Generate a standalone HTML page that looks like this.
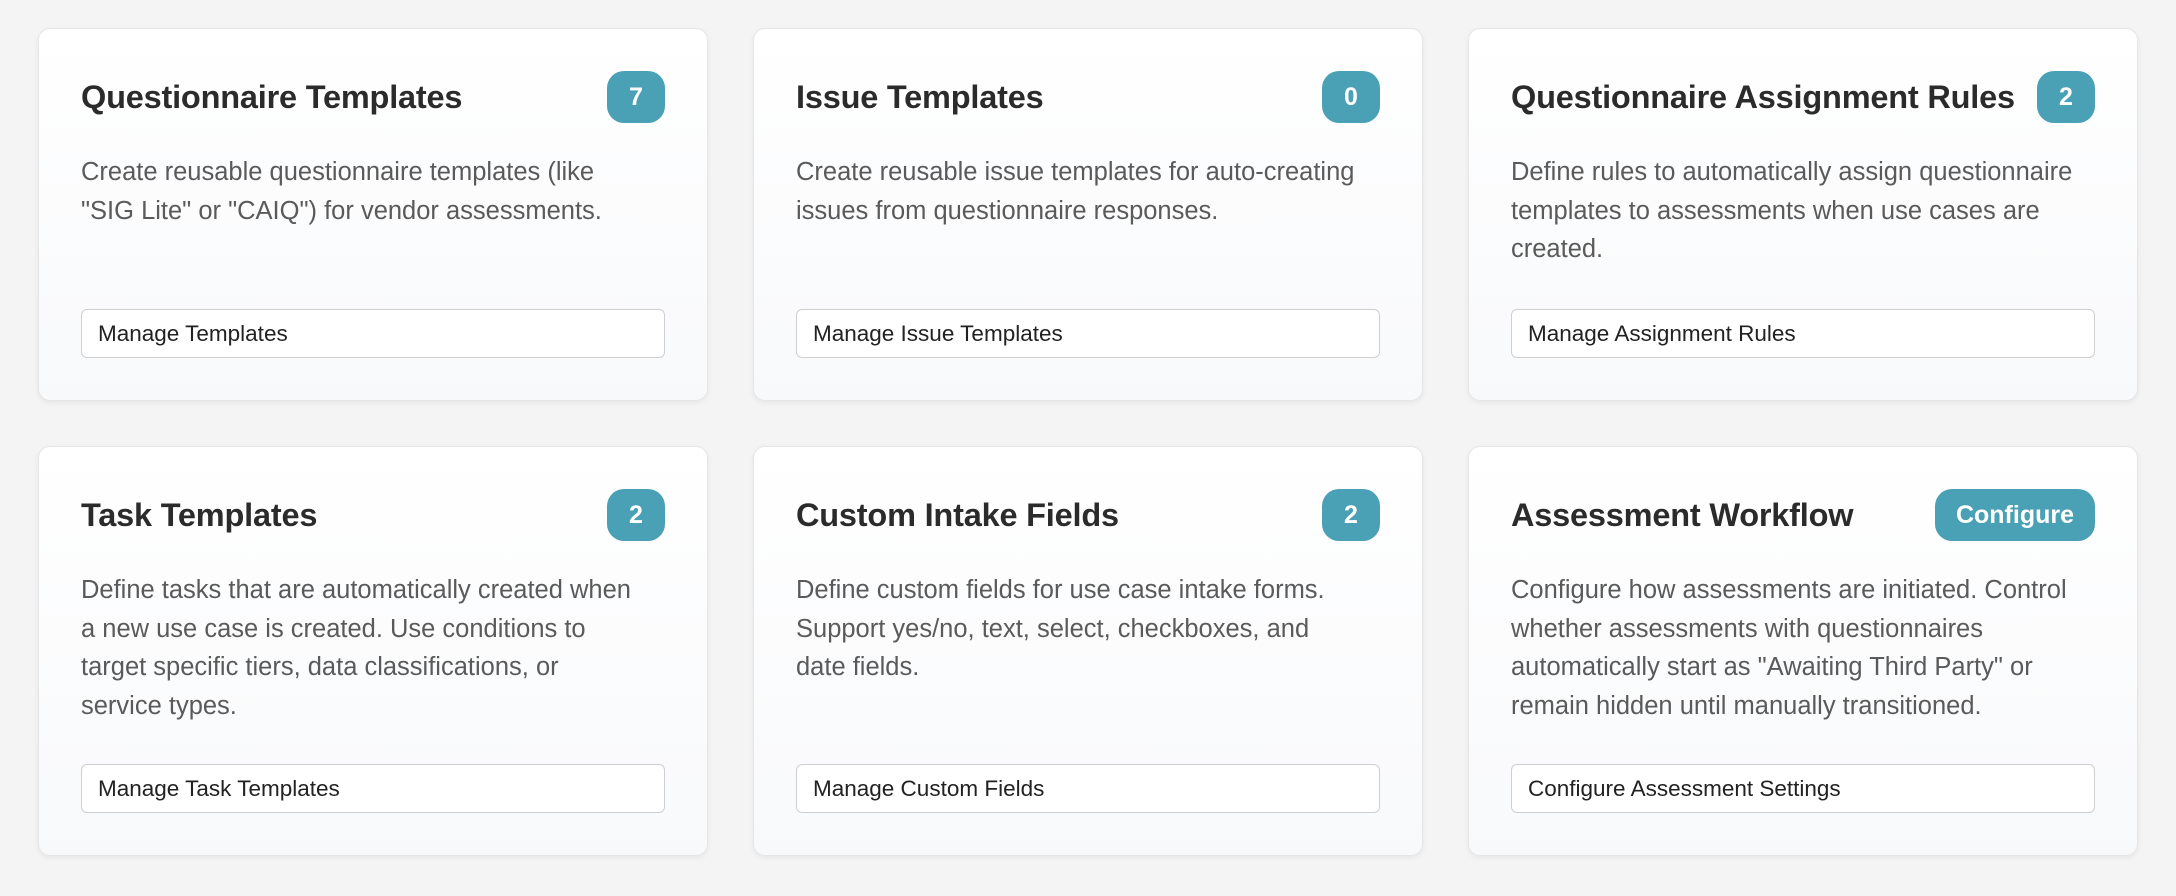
<!DOCTYPE html>
<html><head><meta charset="utf-8"><style>
*{box-sizing:border-box;margin:0;padding:0}
body{width:2176px;height:896px;background:#f4f4f4;font-family:"Liberation Sans",Arial,sans-serif;overflow:hidden}
.grid{position:absolute;left:38px;top:28px;display:grid;grid-template-columns:670px 670px 670px;grid-template-rows:373px 410px;column-gap:45px;row-gap:45px}
.card{background:linear-gradient(#fff,#f8f9fb);border:1px solid #e6e6e6;border-radius:12px;box-shadow:0 2px 6px rgba(0,0,0,.06);padding:42px 42px 42px 42px;display:flex;flex-direction:column}
.hd{display:flex;justify-content:space-between;align-items:center;height:52px}
h2{font-size:32.5px;font-weight:bold;color:#2b2b2b;letter-spacing:-0.2px;white-space:nowrap}
.b{background:#4aa0b5;color:#fff;font-size:25px;font-weight:bold;height:52px;min-width:58px;padding:0 21px;border-radius:17px;display:flex;align-items:center;justify-content:center}
p{margin-top:30px;font-size:25.5px;line-height:38.5px;color:#5a5a5a;white-space:nowrap}
.btn{margin-top:auto;height:49px;border:1px solid #cfcfcf;border-radius:6px;background:#fff;font-size:22.5px;color:#222;padding-left:16px;display:flex;align-items:center}
</style></head><body>
<div class="grid">
<div class="card"><div class="hd"><h2>Questionnaire Templates</h2><div class="b">7</div></div><p>Create reusable questionnaire templates (like<br>"SIG Lite" or "CAIQ") for vendor assessments.</p><div class="btn">Manage Templates</div></div>
<div class="card"><div class="hd"><h2>Issue Templates</h2><div class="b">0</div></div><p>Create reusable issue templates for auto-creating<br>issues from questionnaire responses.</p><div class="btn">Manage Issue Templates</div></div>
<div class="card"><div class="hd"><h2>Questionnaire Assignment Rules</h2><div class="b">2</div></div><p>Define rules to automatically assign questionnaire<br>templates to assessments when use cases are<br>created.</p><div class="btn">Manage Assignment Rules</div></div>
<div class="card"><div class="hd"><h2>Task Templates</h2><div class="b">2</div></div><p>Define tasks that are automatically created when<br>a new use case is created. Use conditions to<br>target specific tiers, data classifications, or<br>service types.</p><div class="btn">Manage Task Templates</div></div>
<div class="card"><div class="hd"><h2>Custom Intake Fields</h2><div class="b">2</div></div><p>Define custom fields for use case intake forms.<br>Support yes/no, text, select, checkboxes, and<br>date fields.</p><div class="btn">Manage Custom Fields</div></div>
<div class="card"><div class="hd"><h2>Assessment Workflow</h2><div class="b">Configure</div></div><p>Configure how assessments are initiated. Control<br>whether assessments with questionnaires<br>automatically start as "Awaiting Third Party" or<br>remain hidden until manually transitioned.</p><div class="btn">Configure Assessment Settings</div></div>
</div>
</body></html>
